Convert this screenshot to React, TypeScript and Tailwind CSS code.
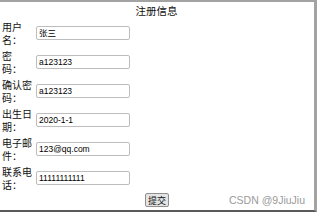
import React from "react";

const rows: { a: string; b: string; v: string }[] = [
  { a: "用户", b: "名：", v: "张三" },
  { a: "密", b: "码：", v: "a123123" },
  { a: "确认密", b: "码：", v: "a123123" },
  { a: "出生日", b: "期：", v: "2020-1-1" },
  { a: "电子邮", b: "件：", v: "123@qq.com" },
  { a: "联系电", b: "话：", v: "11111111111" },
];

export default function App() {
  return (
    <div
      className="relative w-[317px] h-[212px] bg-white border-t-2 border-r-[3px] border-b-2 border-t-[#a3a3a3] border-r-[#a3a3a3] border-b-[#5a5a5a] overflow-hidden text-[#111]"
      style={{ fontFamily: '"Noto Sans CJK SC", "Liberation Sans", sans-serif' }}
    >
      <div className="flex flex-col pt-[2px]">
        <div className="text-center text-[10.5px] leading-[13px] h-[13px] pr-[1px]">注册信息</div>
        <div className="flex flex-col gap-y-[3px] mt-[3px]">
          {rows.map((r, i) => (
            <div key={i} className="flex items-center h-[26px]">
              <div className="w-[36px] shrink-0 pl-[2px] text-[10px] leading-[12px] whitespace-nowrap flex flex-col gap-y-[1px]">
                <div className="h-[12px]">{r.a}</div>
                <div className="h-[12px]">{r.b}</div>
              </div>
              <div
                className="w-[94px] h-[14px] border border-[#bdbdbd] rounded-[2px] flex items-center pl-[2px] text-[8.5px] text-black"
                style={{ fontFamily: '"Liberation Sans", "Noto Sans CJK SC", sans-serif' }}
              >
                {r.v}
              </div>
            </div>
          ))}
        </div>
        <div className="flex justify-center mt-[2px]">
          <div className="w-[24px] h-[14px] bg-[#e4e4e4] border border-[#8f8f8f] rounded-[2px] flex items-center justify-center text-[9px] leading-none">
            提交
          </div>
        </div>
      </div>
      <div
        className="absolute left-[229px] top-[192px] text-[10.5px] leading-[13px] text-[#9a9a9a] whitespace-nowrap"
        style={{ fontFamily: '"Liberation Sans", sans-serif' }}
      >
        CSDN @9JiuJiu
      </div>
    </div>
  );
}
